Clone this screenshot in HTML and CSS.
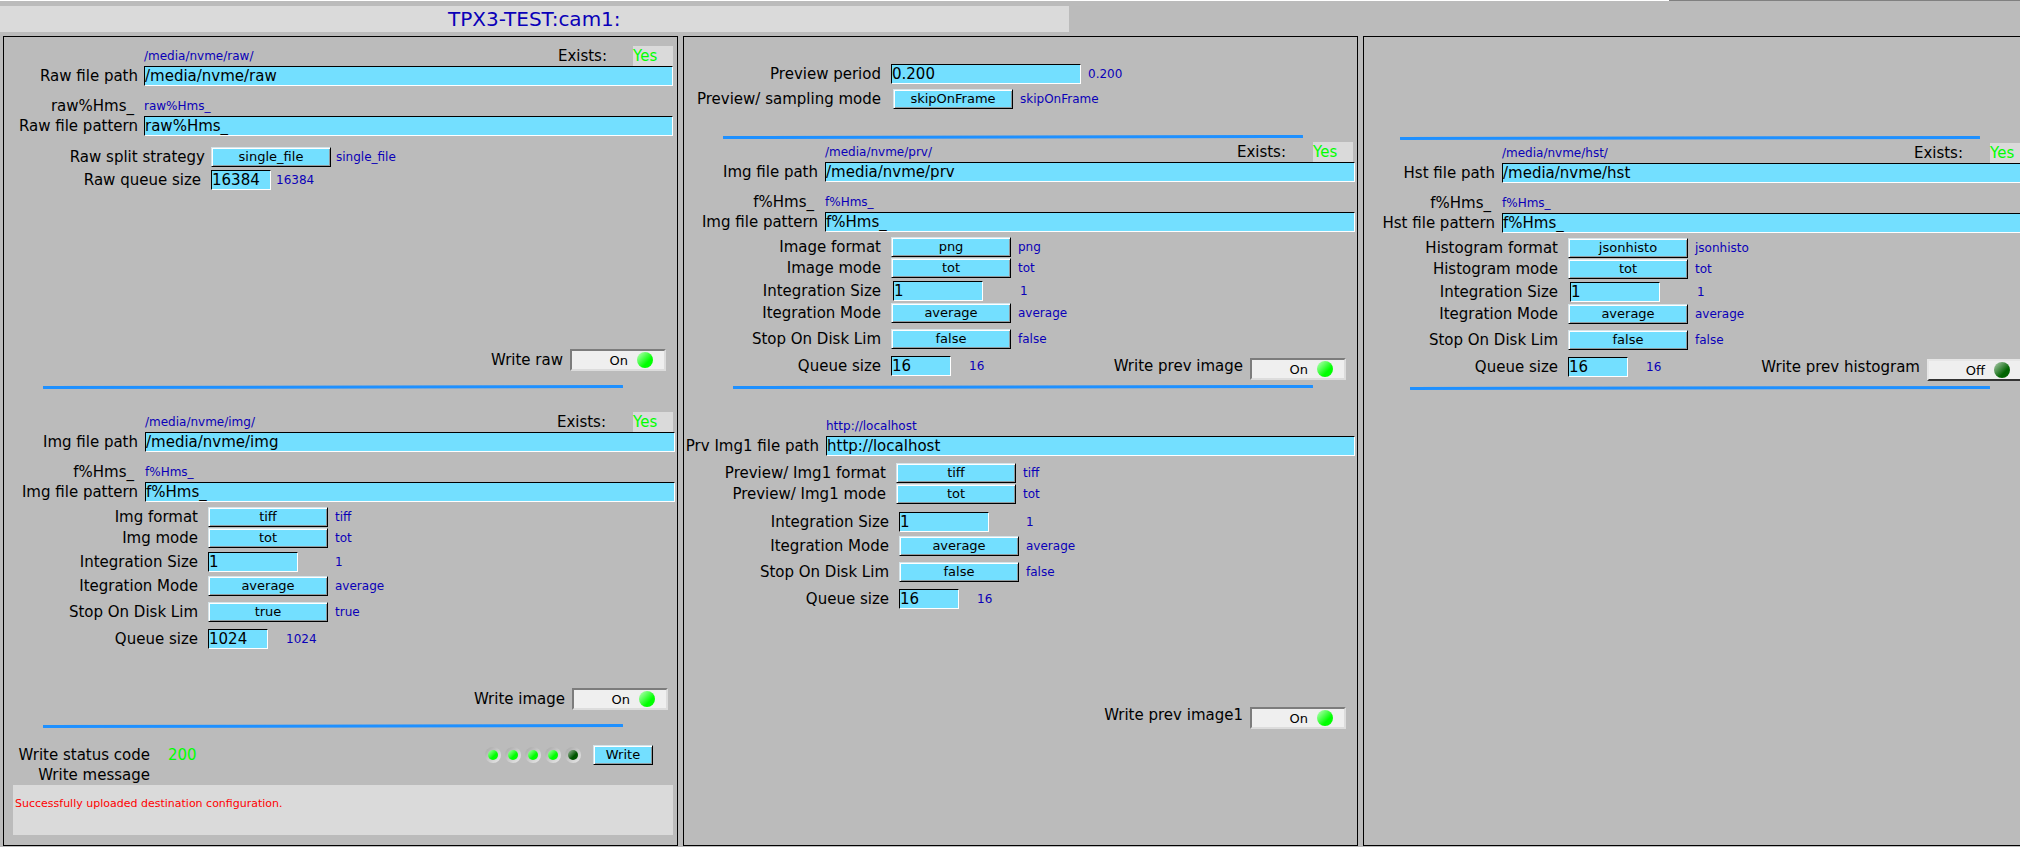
FILE: index.html
```html
<!DOCTYPE html>
<html lang="en">
<head>
<meta charset="utf-8">
<title>TPX3-TEST:cam1:</title>
<link rel="stylesheet" href="styles.css">
</head>
<body>
<div class="top-edge"></div>
<h1 class="title">TPX3-TEST:cam1:</h1>
<main class="panels">

  <section class="panel">
    <div class="file file-raw">
      <div class="file-row"><span class="file-label"></span><output class="readback">/media/nvme/raw/</output><span class="exists">Exists:</span><output class="exists-value">Yes</output></div>
      <div class="file-row"><label class="file-label" for="raw-path">Raw file path</label><input class="field field-fill" id="raw-path" value="/media/nvme/raw"></div>
      <div class="file-row mt-10"><span class="file-label pattern">raw%Hms_</span><output class="readback">raw%Hms_</output></div>
      <div class="file-row"><label class="file-label" for="raw-pattern">Raw file pattern</label><input class="field field-fill" id="raw-pattern" value="raw%Hms_"></div>
    </div>
    <div class="params params-raw">
      <div class="param param-snug mt-11"><label class="param-label" for="raw-split">Raw split strategy</label><select class="menu" id="raw-split"><option>single_file</option></select><output class="readback">single_file</output></div>
      <div class="param mt-3"><label class="param-label" for="raw-queue">Raw queue size</label><input class="field field-s" id="raw-queue" value="16384"><output class="readback">16384</output></div>
    </div>
    <div class="write write-raw"><span class="write-label" id="w-raw">Write raw</span><button class="toggle" type="button" aria-pressed="true" aria-labelledby="w-raw">On<span class="lamp"></span></button></div>
    <svg class="rule mt-14" viewBox="0 0 100 5" preserveAspectRatio="none" aria-hidden="true"><path d="M0 2.5L100 1.5"/></svg>

    <div class="file mt-22">
      <div class="file-row"><span class="file-label"></span><output class="readback">/media/nvme/img/</output><span class="exists">Exists:</span><output class="exists-value">Yes</output></div>
      <div class="file-row"><label class="file-label" for="img-path">Img file path</label><input class="field field-fill" id="img-path" value="/media/nvme/img"></div>
      <div class="file-row mt-10"><span class="file-label pattern">f%Hms_</span><output class="readback">f%Hms_</output></div>
      <div class="file-row"><label class="file-label" for="img-pattern">Img file pattern</label><input class="field field-fill" id="img-pattern" value="f%Hms_"></div>
    </div>
    <div class="params params-img">
      <div class="param mt-5"><label class="param-label" for="img-format">Img format</label><select class="menu" id="img-format"><option>tiff</option></select><output class="readback">tiff</output></div>
      <div class="param mt-1"><label class="param-label" for="img-mode">Img mode</label><select class="menu" id="img-mode"><option>tot</option></select><output class="readback">tot</output></div>
      <div class="param mt-4"><label class="param-label" for="img-int">Integration Size</label><input class="field field-m" id="img-int" value="1"><output class="readback">1</output></div>
      <div class="param mt-4"><label class="param-label" for="img-intmode">Itegration Mode</label><select class="menu" id="img-intmode"><option>average</option></select><output class="readback">average</output></div>
      <div class="param mt-6"><label class="param-label" for="img-stop">Stop On Disk Lim</label><select class="menu" id="img-stop"><option>true</option></select><output class="readback">true</output></div>
      <div class="param mt-7"><label class="param-label" for="img-queue">Queue size</label><input class="field field-s" id="img-queue" value="1024"><output class="readback apart">1024</output></div>
    </div>
    <div class="write write-img"><span class="write-label" id="w-img">Write image</span><button class="toggle" type="button" aria-pressed="true" aria-labelledby="w-img">On<span class="lamp"></span></button></div>
    <svg class="rule mt-14" viewBox="0 0 100 5" preserveAspectRatio="none" aria-hidden="true"><path d="M0 2.5L100 1.5"/></svg>

    <div class="status">
      <span class="status-label">Write status code</span><output class="status-code">200</output>
      <span class="leds"><i class="led"></i><i class="led"></i><i class="led"></i><i class="led"></i><i class="led led-off"></i></span>
      <button class="push" type="button">Write</button>
    </div>
    <div class="status-row"><span class="status-label">Write message</span></div>
    <output class="message">Successfully uploaded destination configuration.</output>
  </section>

  <section class="panel">
    <div class="params params-preview">
      <div class="param"><label class="param-label" for="prv-period">Preview period</label><input class="field field-l" id="prv-period" value="0.200"><output class="readback">0.200</output></div>
      <div class="param indent mt-5"><label class="param-label" for="prv-sampling">Preview/ sampling mode</label><select class="menu" id="prv-sampling"><option>skipOnFrame</option></select><output class="readback">skipOnFrame</output></div>
    </div>
    <svg class="rule mt-26" viewBox="0 0 100 5" preserveAspectRatio="none" aria-hidden="true"><path d="M0 2.5L100 1.5"/></svg>

    <div class="file mt-2">
      <div class="file-row"><span class="file-label"></span><output class="readback">/media/nvme/prv/</output><span class="exists">Exists:</span><output class="exists-value">Yes</output></div>
      <div class="file-row"><label class="file-label" for="prv-path">Img file path</label><input class="field field-fill" id="prv-path" value="/media/nvme/prv"></div>
      <div class="file-row mt-10"><span class="file-label pattern">f%Hms_</span><output class="readback">f%Hms_</output></div>
      <div class="file-row"><label class="file-label" for="prv-pattern">Img file pattern</label><input class="field field-fill" id="prv-pattern" value="f%Hms_"></div>
    </div>
    <div class="params">
      <div class="param mt-5"><label class="param-label" for="prv-format">Image format</label><select class="menu" id="prv-format"><option>png</option></select><output class="readback">png</output></div>
      <div class="param mt-1"><label class="param-label" for="prv-mode">Image mode</label><select class="menu" id="prv-mode"><option>tot</option></select><output class="readback">tot</output></div>
      <div class="param indent mt-3"><label class="param-label" for="prv-int">Integration Size</label><input class="field field-m" id="prv-int" value="1"><output class="readback">1</output></div>
      <div class="param mt-2"><label class="param-label" for="prv-intmode">Itegration Mode</label><select class="menu" id="prv-intmode"><option>average</option></select><output class="readback">average</output></div>
      <div class="param mt-6"><label class="param-label" for="prv-stop">Stop On Disk Lim</label><select class="menu" id="prv-stop"><option>false</option></select><output class="readback">false</output></div>
      <div class="param param-write mt-7"><label class="param-label" for="prv-queue">Queue size</label><input class="field field-s" id="prv-queue" value="16"><output class="readback apart">16</output>
        <div class="write write-raised"><span class="write-label" id="w-prv">Write prev image</span><button class="toggle" type="button" aria-pressed="true" aria-labelledby="w-prv">On<span class="lamp"></span></button></div>
      </div>
    </div>
    <svg class="rule rule-right mt-5" viewBox="0 0 100 5" preserveAspectRatio="none" aria-hidden="true"><path d="M0 2.5L100 1.5"/></svg>

    <div class="file file-wide mt-26">
      <div class="file-row"><span class="file-label"></span><output class="readback">http://localhost</output></div>
      <div class="file-row"><label class="file-label" for="img1-path">Prv Img1 file path</label><input class="field field-fill" id="img1-path" value="http://localhost"></div>
    </div>
    <div class="params params-img1-head">
      <div class="param mt-7"><label class="param-label" for="img1-format">Preview/ Img1 format</label><select class="menu" id="img1-format"><option>tiff</option></select><output class="readback">tiff</output></div>
      <div class="param mt-1"><label class="param-label" for="img1-mode">Preview/ Img1 mode</label><select class="menu" id="img1-mode"><option>tot</option></select><output class="readback">tot</output></div>
    </div>
    <div class="params params-img1">
      <div class="param mt-8"><label class="param-label" for="img1-int">Integration Size</label><input class="field field-m" id="img1-int" value="1"><output class="readback">1</output></div>
      <div class="param mt-4"><label class="param-label" for="img1-intmode">Itegration Mode</label><select class="menu" id="img1-intmode"><option>average</option></select><output class="readback">average</output></div>
      <div class="param mt-6"><label class="param-label" for="img1-stop">Stop On Disk Lim</label><select class="menu" id="img1-stop"><option>false</option></select><output class="readback">false</output></div>
      <div class="param mt-7"><label class="param-label" for="img1-queue">Queue size</label><input class="field field-s" id="img1-queue" value="16"><output class="readback apart">16</output></div>
    </div>
    <div class="write write-raised write-img1"><span class="write-label" id="w-img1">Write prev image1</span><button class="toggle" type="button" aria-pressed="true" aria-labelledby="w-img1">On<span class="lamp"></span></button></div>
  </section>

  <section class="panel panel-hist">
    <svg class="rule rule-first" viewBox="0 0 100 5" preserveAspectRatio="none" aria-hidden="true"><path d="M0 2.5L100 1.5"/></svg>
    <div class="file mt-2">
      <div class="file-row"><span class="file-label"></span><output class="readback">/media/nvme/hst/</output><span class="exists">Exists:</span><output class="exists-value">Yes</output></div>
      <div class="file-row"><label class="file-label" for="hst-path">Hst file path</label><input class="field field-fill" id="hst-path" value="/media/nvme/hst"></div>
      <div class="file-row mt-10"><span class="file-label pattern">f%Hms_</span><output class="readback">f%Hms_</output></div>
      <div class="file-row"><label class="file-label" for="hst-pattern">Hst file pattern</label><input class="field field-fill" id="hst-pattern" value="f%Hms_"></div>
    </div>
    <div class="params">
      <div class="param mt-5"><label class="param-label" for="hst-format">Histogram format</label><select class="menu" id="hst-format"><option>jsonhisto</option></select><output class="readback">jsonhisto</output></div>
      <div class="param mt-1"><label class="param-label" for="hst-mode">Histogram mode</label><select class="menu" id="hst-mode"><option>tot</option></select><output class="readback">tot</output></div>
      <div class="param indent mt-3"><label class="param-label" for="hst-int">Integration Size</label><input class="field field-m" id="hst-int" value="1"><output class="readback">1</output></div>
      <div class="param mt-2"><label class="param-label" for="hst-intmode">Itegration Mode</label><select class="menu" id="hst-intmode"><option>average</option></select><output class="readback">average</output></div>
      <div class="param mt-6"><label class="param-label" for="hst-stop">Stop On Disk Lim</label><select class="menu" id="hst-stop"><option>false</option></select><output class="readback">false</output></div>
      <div class="param param-write mt-7"><label class="param-label" for="hst-queue">Queue size</label><input class="field field-s" id="hst-queue" value="16"><output class="readback apart">16</output>
        <div class="write write-raised"><span class="write-label" id="w-hst">Write prev histogram</span><button class="toggle toggle-off" type="button" aria-pressed="false" aria-labelledby="w-hst">Off<span class="lamp lamp-off"></span></button></div>
      </div>
    </div>
    <svg class="rule rule-right mt-5" viewBox="0 0 100 5" preserveAspectRatio="none" aria-hidden="true"><path d="M0 2.5L100 1.5"/></svg>
  </section>

</main>
</body>
</html>
```

FILE: styles.css
```css
:root {
  --bg: #bbbbbb;
  --pale: #dadada;
  --cyan: #73dfff;
  --blue: #0a00b8;
  --green: #00ff00;
}

* { box-sizing: border-box; }

body {
  margin: 0;
  min-height: 100vh;
  display: flex;
  flex-direction: column;
  overflow: hidden;
  background: var(--bg);
  color: #000;
  font: 15px/20px "DejaVu Sans", sans-serif;
  white-space: nowrap;
}

input, select, button { font-family: inherit; color: inherit; }

.top-edge {
  height: 1px;
  background: linear-gradient(to right, #fff 82.6%, #808080 82.6%);
}

.title {
  width: 52.9%;
  margin: 5px 0 4px;
  background: var(--pale);
  color: var(--blue);
  font-size: 20px;
  font-weight: normal;
  line-height: 26px;
  text-align: center;
}

/* The three panels run slightly past the right edge of the window. */
.panels {
  flex: 1;
  width: calc(100% + 20px);
  display: grid;
  grid-template-columns: repeat(3, 1fr);
  gap: 5px;
  padding: 0 2px 1px 3px;
}

.panel {
  min-width: 0;
  padding: 9px 0 7px 3px;
  border: 1px solid #000;
}

.panel-hist { padding: 9px 3px 7px 0; }

/* File path and pattern rows */
.file { --file-label: 131px; --file-gap: 7px; --file-end: 2px; }
.file-raw { --file-label: 131px; --file-gap: 6px; --file-end: 4px; }
.file-wide { --file-label: 132px; }

.file-row {
  display: flex;
  align-items: center;
  gap: var(--file-gap);
  height: 20px;
  padding-right: var(--file-end);
}

.file-label {
  flex: none;
  width: var(--file-label);
  display: flex;
  justify-content: flex-end;
}

.pattern { padding-right: 4px; }

.readback {
  color: var(--blue);
  font-size: 12px;
}

.exists { margin-left: auto; }

.exists-value {
  width: 40px;
  height: 20px;
  margin: 0 2px 0 20px;
  background: var(--pale);
  color: var(--green);
}

.file-raw .exists-value { margin-right: 0; }

/* Parameter rows */
.params { --label: 194px; --label-gap: 10px; }
.params-raw { --label: 194px; }
.params-img { --label: 191px; }
.params-preview { padding-top: 18px; }
.params-img1-head { --label: 199px; }
.params-img1 { --label: 202px; }

.param {
  display: flex;
  align-items: center;
}

.param-label {
  flex: none;
  width: var(--label);
  margin-right: var(--label-gap);
  display: flex;
  justify-content: flex-end;
}

.param-snug { --label: 198px; --label-gap: 6px; }
.indent { --label-gap: 12px; }
.param .readback { margin-left: 7px; }
.params-raw .readback { margin-left: 5px; }
.param .field-m + .readback { margin-left: 37px; }
.param .apart { margin-left: 18px; }
.param-write { align-items: flex-start; }

.field {
  height: 20px;
  padding: 0;
  border: 1px solid;
  border-color: #000 #fff #fff #000;
  border-radius: 0;
  background: var(--cyan);
  font-size: 15px;
}

.field-fill { flex: 1; min-width: 0; }
.field-s { width: 60px; }
.field-m { width: 90px; }
.field-l { width: 190px; }

.menu, .push {
  height: 20px;
  padding: 0;
  border: 1px solid;
  border-color: #d5e4e9 #000 #000 #d5e4e9;
  border-radius: 0;
  background: var(--cyan);
  box-shadow: inset 1px 1px #fff, inset -1px -1px #8f9a9e;
  font-size: 13px;
  line-height: 16px;
  text-align: center;
}

.menu {
  width: 120px;
  appearance: none;
  text-align-last: center;
}

.push { width: 60px; }

/* Write switches */
.write {
  display: flex;
  justify-content: flex-end;
  align-items: center;
  margin-left: auto;
  padding-right: 11px;
  gap: 7px;
}

.write-raw { margin-top: 159px; }
.write-img { margin-top: 39px; padding-right: 9px; }
.write-img1 { margin-top: 98px; }
.write-raised { align-items: flex-start; }
.write-raised .write-label { line-height: 16px; }
.param-write .write-raised { padding-top: 2px; }

.toggle {
  width: 96px;
  height: 22px;
  display: flex;
  justify-content: flex-end;
  align-items: center;
  gap: 9px;
  padding: 0 11px 0 0;
  border: 2px solid;
  border-color: #7c7c7c #dcdcdc #dcdcdc #7c7c7c;
  background: #efefef;
  font-size: 13px;
}

.toggle-off { border-color: #e6e6e6 #000 #333 #e6e6e6; }

.lamp {
  width: 16px;
  height: 16px;
  border-radius: 50%;
  background: linear-gradient(135deg, #b4ffb4 5%, #00ff00 65%);
}

.lamp-off { background: linear-gradient(135deg, #a8c8a8 5%, #006400 65%); }

/* Dividers */
.rule {
  display: block;
  width: calc(100% - 90px);
  height: 5px;
  margin-left: 36px;
}

.rule path {
  fill: none;
  stroke: #1e90ff;
  stroke-width: 3;
}

.rule-right { margin-left: 46px; }
.rule-first { margin-top: 90px; }

/* Write status */
.status, .status-row { display: flex; align-items: center; height: 20px; }
.status { margin-top: 16px; padding-right: 24px; }
.status-label { width: 143px; text-align: right; }
.status-code { margin-left: 18px; color: var(--green); }
.leds { display: flex; gap: 4px; margin: 0 12px 0 auto; }

.led {
  width: 16px;
  height: 16px;
  display: grid;
  place-items: center;
  border-radius: 50%;
  background: linear-gradient(135deg, #a4a4a4, #ececec);
}

.led::before {
  content: "";
  width: 10px;
  height: 10px;
  border-radius: 50%;
  background: linear-gradient(135deg, #90ff90 10%, #00ff00 60%);
}

.led-off::before { background: linear-gradient(135deg, #86a886 10%, #005500 60%); }

.message {
  display: block;
  height: 50px;
  margin: 0 4px 0 6px;
  padding: 12px 2px;
  background: var(--pale);
  color: #ff0000;
  font-size: 11px;
  line-height: 14px;
}

/* Spacing scale */
.mt-1 { margin-top: 1px; }
.mt-2 { margin-top: 2px; }
.mt-3 { margin-top: 3px; }
.mt-4 { margin-top: 4px; }
.mt-5 { margin-top: 5px; }
.mt-6 { margin-top: 6px; }
.mt-7 { margin-top: 7px; }
.mt-8 { margin-top: 8px; }
.mt-10 { margin-top: 10px; }
.mt-11 { margin-top: 11px; }
.mt-14 { margin-top: 14px; }
.mt-22 { margin-top: 22px; }
.mt-26 { margin-top: 26px; }
```
